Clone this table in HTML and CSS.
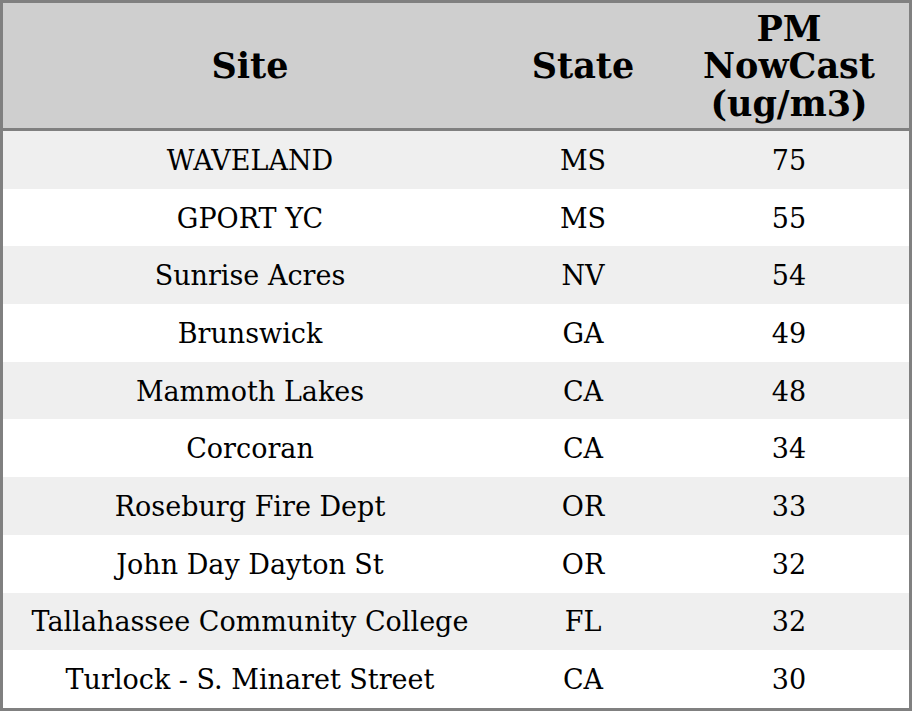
FILE: index.html
```html
<!DOCTYPE html>
<html>
<head>
<meta charset="utf-8">
<link rel="stylesheet" href="styles.css">
</head>
<body>
<table class="aq">
  <colgroup>
    <col class="c-site">
    <col class="c-state">
    <col class="c-pm">
  </colgroup>
  <thead>
    <tr>
      <th>Site</th>
      <th>State</th>
      <th>PM<br>NowCast<br>(ug/m3)</th>
    </tr>
  </thead>
  <tbody>
    <tr><td>WAVELAND</td><td>MS</td><td>75</td></tr>
    <tr><td>GPORT YC</td><td>MS</td><td>55</td></tr>
    <tr><td>Sunrise Acres</td><td>NV</td><td>54</td></tr>
    <tr><td>Brunswick</td><td>GA</td><td>49</td></tr>
    <tr><td>Mammoth Lakes</td><td>CA</td><td>48</td></tr>
    <tr><td>Corcoran</td><td>CA</td><td>34</td></tr>
    <tr><td>Roseburg Fire Dept</td><td>OR</td><td>33</td></tr>
    <tr><td>John Day Dayton St</td><td>OR</td><td>32</td></tr>
    <tr><td>Tallahassee Community College</td><td>FL</td><td>32</td></tr>
    <tr><td>Turlock - S. Minaret Street</td><td>CA</td><td>30</td></tr>
  </tbody>
</table>
</body>
</html>
```
FILE: styles.css
```css
html, body {
  margin: 0;
  padding: 0;
  background: #ffffff;
}
.aq {
  width: 912px;
  border: 3px solid #808080;
  border-collapse: separate;
  border-spacing: 0;
  font-family: "DejaVu Serif", serif;
  color: #000;
  table-layout: fixed;
}
.c-site { width: 494px; }
.c-state { width: 172px; }
.c-pm { width: 240px; }
.aq th {
  background: #cfcfcf;
  font-size: 35px;
  font-weight: bold;
  line-height: 37.5px;
  padding: 6.75px 0 5.75px;
  border-bottom: 3px solid #808080;
  text-align: center;
  vertical-align: middle;
}
.aq tbody tr {
  height: 57.7px;
}
.aq td {
  font-size: 27px;
  line-height: 30px;
  padding: 2px 0 0;
  text-align: center;
  vertical-align: middle;
}
.aq tbody tr:nth-child(odd) td {
  background: #efefef;
}
```
